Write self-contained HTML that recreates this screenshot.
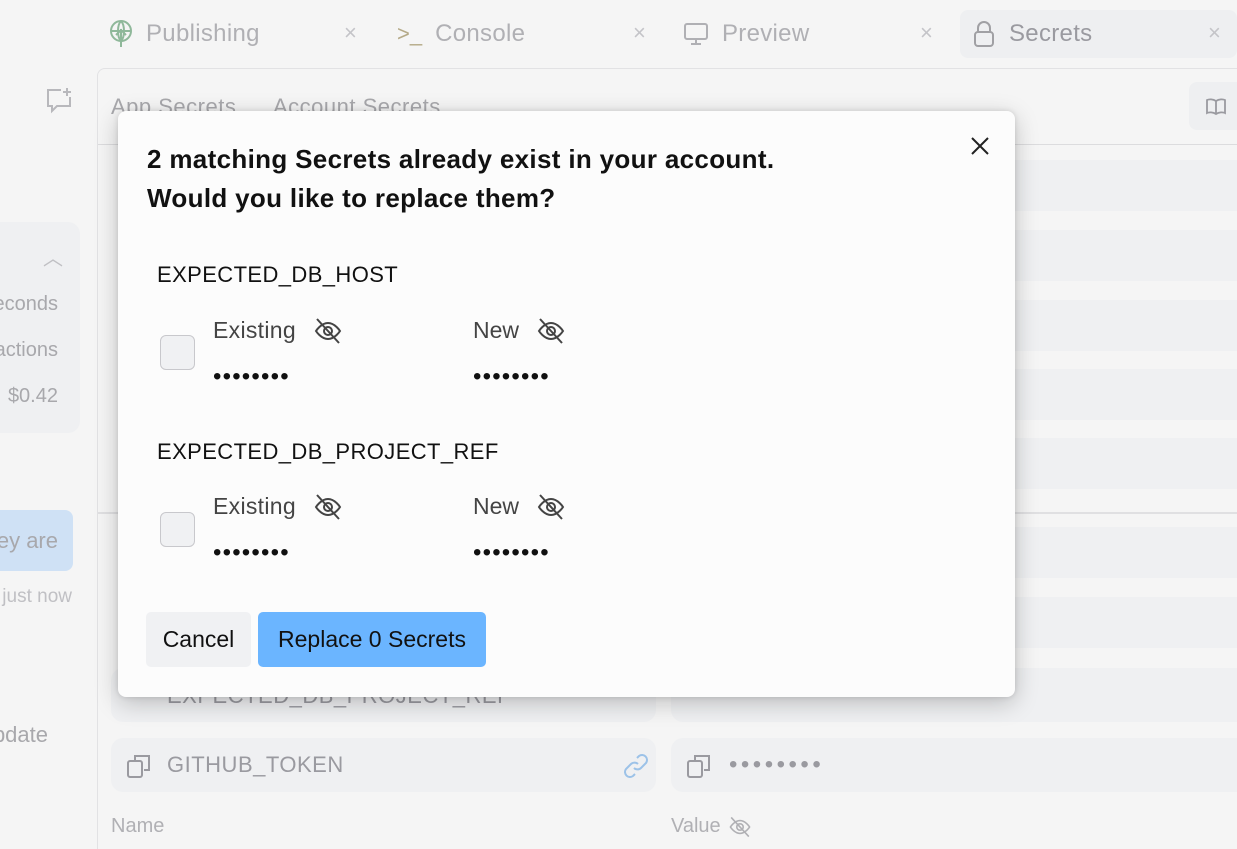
<!DOCTYPE html>
<html><head><style>
*{box-sizing:border-box;margin:0;padding:0}
body{width:1237px;height:849px;overflow:hidden;background:#f5f5f5;font-family:"Liberation Sans",sans-serif;position:relative}
.abs{position:absolute}
.tab{position:absolute;top:0;height:68px;display:flex;align-items:center;font-size:24px;color:#b0b0b4}
.x{position:absolute;font-size:22px;color:#c4c4c8;top:20px}
.row{position:absolute;background:#eff0f2;border-radius:12px;height:54px}
.gray{color:#a8a8ac}
svg{display:block}
.dots{position:absolute;font-size:24px;color:#111;letter-spacing:1.2px;line-height:1}
</style></head><body>
<!-- tabs -->
<div class="abs" style="left:960px;top:10px;width:277px;height:48px;background:#eeeff1;border-radius:8px"></div>
<div class="tab" style="left:108px"><svg width="26" height="30" viewBox="0 0 26 30" fill="none" stroke="#8fb89a" stroke-width="2"><circle cx="13" cy="12" r="10"/><path d="M3 12h20M13 2c-4 4-4 16 0 20M13 2c4 4 4 16 0 20M13 10v18M8 16l5-5 5 5"/></svg><span style="margin-left:12px;letter-spacing:0.3px">Publishing</span></div>
<div class="x" style="left:344px">×</div>
<div class="tab" style="left:397px"><span style="color:#b5aa88;font-size:22px">&gt;_</span><span style="margin-left:13px;letter-spacing:0.3px">Console</span></div>
<div class="x" style="left:633px">×</div>
<div class="tab" style="left:683px"><svg width="26" height="26" viewBox="0 0 26 26" fill="none" stroke="#b0b0b4" stroke-width="2"><rect x="2" y="3" width="22" height="15" rx="2"/><path d="M13 18v5M8 23h10"/></svg><span style="margin-left:13px;letter-spacing:0.3px">Preview</span></div>
<div class="x" style="left:920px">×</div>
<div class="tab" style="left:973px;color:#9a9aa0"><svg width="22" height="28" viewBox="0 0 22 28" fill="none" stroke="#a0a0a4" stroke-width="2"><rect x="2" y="12" width="18" height="14" rx="3"/><path d="M5 12V8a6 6 0 0 1 12 0v4"/></svg><span style="margin-left:14px;letter-spacing:0.3px">Secrets</span></div>
<div class="x" style="left:1208px">×</div>
<!-- sidebar -->
<div class="abs" style="left:97px;top:68px;width:1140px;height:781px;border-left:1px solid #e2e2e4;border-top:1px solid #e2e2e4;border-top-left-radius:8px"></div>
<div class="abs" style="left:45px;top:86px"><svg width="28" height="28" viewBox="0 0 28 28" fill="none" stroke="#b8b8bc" stroke-width="2"><path d="M16 4H3v16h4v5l5-5h13v-9"/><path d="M22 2v8M18 6h8"/></svg></div>
<div class="abs" style="left:-20px;top:222px;width:100px;height:211px;background:#eff0f2;border-radius:12px"></div>
<div class="abs" style="left:43px;top:242px;color:#c0c0c4;font-size:20px">︿</div>
<div class="abs gray" style="left:0;top:293px;font-size:20px;width:58px;text-align:right;white-space:nowrap;overflow:hidden;direction:rtl">seconds</div>
<div class="abs gray" style="left:0;top:339px;font-size:20px;width:58px;text-align:right;overflow:hidden;direction:rtl;white-space:nowrap">actions</div>
<div class="abs gray" style="left:0;top:385px;font-size:20px;width:58px;text-align:right">$0.42</div>
<div class="abs" style="left:-20px;top:510px;width:93px;height:61px;background:#cfe1f5;border-radius:8px"></div>
<div class="abs gray" style="left:0;top:528px;font-size:22px;width:58px;text-align:right;overflow:hidden;direction:rtl;white-space:nowrap">they are</div>
<div class="abs" style="left:0;top:586px;font-size:19px;width:72px;text-align:right;color:#c0c0c4;overflow:hidden;direction:rtl;white-space:nowrap">just now</div>
<div class="abs gray" style="left:0;top:722px;font-size:22px;width:48px;overflow:hidden;direction:rtl;white-space:nowrap">update</div>
<!-- panel -->
<div class="abs gray" style="left:111px;top:94px;font-size:22px;letter-spacing:0.5px">App Secrets</div>
<div class="abs gray" style="left:273px;top:94px;font-size:22px;letter-spacing:0.5px">Account Secrets</div>
<div class="abs" style="left:98px;top:144px;width:1139px;height:1px;background:#dcdcde"></div>
<div class="abs" style="left:1189px;top:82px;width:60px;height:48px;background:#eeeff1;border-radius:8px"></div>
<svg class="abs" style="left:1205px;top:97px" width="22" height="20" viewBox="0 0 22 20" fill="none" stroke="#9a9aa0" stroke-width="1.8"><path d="M11 4C8 2 4 2 2 3v13c2-1 6-1 9 1 3-2 7-2 9-1V3c-2-1-6-1-9 1zM11 4v13"/></svg>
<div class="row" style="left:671px;top:160px;width:600px;height:51px"></div>
<div class="row" style="left:671px;top:230px;width:600px;height:51px"></div>
<div class="row" style="left:671px;top:300px;width:600px;height:51px"></div>
<div class="row" style="left:671px;top:369px;width:600px;height:51px"></div>
<div class="row" style="left:671px;top:438px;width:600px;height:51px"></div>
<div class="abs" style="left:98px;top:512px;width:1139px;height:2px;background:#e0e0e2"></div>
<div class="row" style="left:671px;top:527px;width:600px;height:51px"></div>
<div class="row" style="left:671px;top:597px;width:600px;height:51px"></div>
<div class="row" style="left:111px;top:668px;width:545px"></div>
<div class="row" style="left:671px;top:668px;width:600px"></div>
<div class="abs gray" style="left:167px;top:683px;font-size:22px;color:#9a9aa0;letter-spacing:0.5px">EXPECTED_DB_PROJECT_REF</div>
<div class="row" style="left:111px;top:738px;width:545px"></div>
<div class="row" style="left:671px;top:738px;width:600px"></div>
<div class="abs" style="left:126px;top:752px"><svg width="26" height="28" viewBox="0 0 26 28" fill="none" stroke="#9a9aa0" stroke-width="2"><rect x="2" y="9" width="14" height="16" rx="2"/><path d="M9 9V4h14v14h-5"/></svg></div>
<div class="abs gray" style="left:167px;top:752px;font-size:22px;color:#9a9aa0;letter-spacing:0.5px">GITHUB_TOKEN</div>
<div class="abs" style="left:622px;top:752px"><svg width="28" height="28" viewBox="0 0 28 28" fill="none" stroke="#9cc2e8" stroke-width="2"><path d="M12 16a5 5 0 0 0 7 0l5-5a5 5 0 0 0-7-7l-2 2M16 12a5 5 0 0 0-7 0l-5 5a5 5 0 0 0 7 7l2-2"/></svg></div>
<div class="abs" style="left:686px;top:752px"><svg width="26" height="28" viewBox="0 0 26 28" fill="none" stroke="#9a9aa0" stroke-width="2"><rect x="2" y="9" width="14" height="16" rx="2"/><path d="M9 9V4h14v14h-5"/></svg></div>
<div class="abs" style="left:729px;top:751px;font-size:24px;color:#9a9aa0;letter-spacing:3.5px">••••••••</div>
<div class="abs gray" style="left:111px;top:815px;font-size:20px;color:#b0b0b4">Name</div>
<div class="abs gray" style="left:671px;top:815px;font-size:20px;color:#b0b0b4">Value</div>
<svg class="abs" style="left:728px;top:815px" width="24" height="24" viewBox="0 0 30 30" fill="none" stroke="#b0b0b4" stroke-width="2"><path d="M3 15s5-8 12-8 12 8 12 8-5 8-12 8S3 15 3 15z"/><circle cx="15" cy="15" r="4"/><path d="M4 3l22 24"/></svg>
<!-- modal -->
<div class="abs" style="left:118px;top:111px;width:897px;height:586px;background:#fcfcfc;border-radius:8px;box-shadow:0 6px 24px rgba(0,0,0,.22),0 0 6px rgba(0,0,0,.12)">
 <div class="abs" style="left:29px;top:29px;font-size:26px;line-height:39px;color:#111;font-weight:bold;letter-spacing:0.33px;white-space:nowrap">2 matching Secrets already exist in your account.<br>Would you like to replace them?</div>
 <svg class="abs" style="left:852px;top:25px" width="20" height="20" viewBox="0 0 20 20" stroke="#222" stroke-width="2"><path d="M2 2l16 16M18 2L2 18"/></svg>
 <!-- group 1 -->
 <div class="abs" style="left:39px;top:151px;font-size:22px;color:#111;letter-spacing:0.4px">EXPECTED_DB_HOST</div>
 <div class="abs" style="left:42px;top:224px;width:35px;height:35px;border:1px solid #c8c8cc;border-radius:6px;background:#f0f1f3"></div>
 <div class="abs" style="left:95px;top:206px;font-size:23px;color:#444;letter-spacing:0.3px">Existing</div>
 <svg class="abs" style="left:195px;top:205px" width="30" height="30" viewBox="0 0 30 30" fill="none" stroke="#444" stroke-width="2"><path d="M3 15s5-8 12-8 12 8 12 8-5 8-12 8S3 15 3 15z"/><circle cx="15" cy="15" r="4"/><path d="M4 3l22 24"/></svg>
 <div class="dots" style="left:95px;top:254px">••••••••</div>
 <div class="abs" style="left:355px;top:206px;font-size:23px;color:#444">New</div>
 <svg class="abs" style="left:418px;top:205px" width="30" height="30" viewBox="0 0 30 30" fill="none" stroke="#444" stroke-width="2"><path d="M3 15s5-8 12-8 12 8 12 8-5 8-12 8S3 15 3 15z"/><circle cx="15" cy="15" r="4"/><path d="M4 3l22 24"/></svg>
 <div class="dots" style="left:355px;top:254px">••••••••</div>
 <!-- group 2 -->
 <div class="abs" style="left:39px;top:328px;font-size:22px;color:#111;letter-spacing:0.4px">EXPECTED_DB_PROJECT_REF</div>
 <div class="abs" style="left:42px;top:401px;width:35px;height:35px;border:1px solid #c8c8cc;border-radius:6px;background:#f0f1f3"></div>
 <div class="abs" style="left:95px;top:382px;font-size:23px;color:#444;letter-spacing:0.3px">Existing</div>
 <svg class="abs" style="left:195px;top:381px" width="30" height="30" viewBox="0 0 30 30" fill="none" stroke="#444" stroke-width="2"><path d="M3 15s5-8 12-8 12 8 12 8-5 8-12 8S3 15 3 15z"/><circle cx="15" cy="15" r="4"/><path d="M4 3l22 24"/></svg>
 <div class="dots" style="left:95px;top:430px">••••••••</div>
 <div class="abs" style="left:355px;top:382px;font-size:23px;color:#444">New</div>
 <svg class="abs" style="left:418px;top:381px" width="30" height="30" viewBox="0 0 30 30" fill="none" stroke="#444" stroke-width="2"><path d="M3 15s5-8 12-8 12 8 12 8-5 8-12 8S3 15 3 15z"/><circle cx="15" cy="15" r="4"/><path d="M4 3l22 24"/></svg>
 <div class="dots" style="left:355px;top:430px">••••••••</div>
 <!-- buttons -->
 <div class="abs" style="left:28px;top:501px;width:105px;height:55px;background:#f0f1f3;border-radius:5px;font-size:23px;color:#111;display:flex;align-items:center;justify-content:center">Cancel</div>
 <div class="abs" style="left:140px;top:501px;width:228px;height:55px;background:#6bb5ff;border-radius:5px;font-size:23px;color:#111;display:flex;align-items:center;justify-content:center">Replace 0 Secrets</div>
</div>
</body></html>
